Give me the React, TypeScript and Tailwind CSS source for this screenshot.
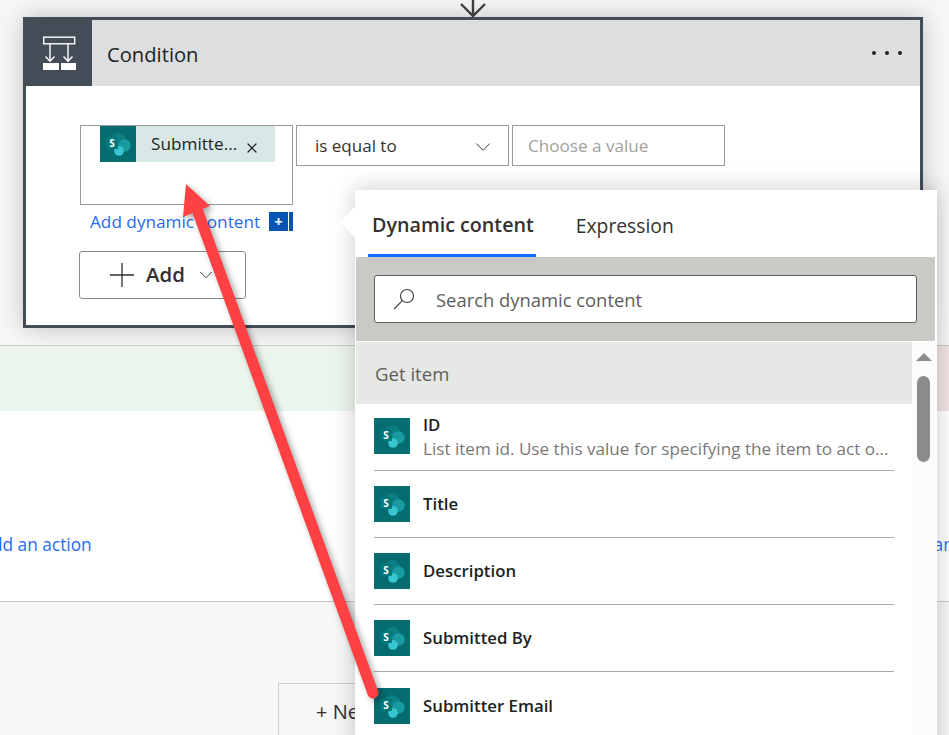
import { ChevronDown, X } from "lucide-react";

const FONT = "font-['Open_Sans','Noto_Sans',sans-serif]";

function SharePointIcon({ size = 36 }: { size?: number }) {
  return (
    <svg width={size} height={size} viewBox="0 0 36 36" className="shrink-0">
      <rect width="36" height="36" fill="#056c70" />
      <circle cx="18.5" cy="14.5" r="7.5" fill="#0b7f83" />
      <circle cx="24.5" cy="19.5" r="6.2" fill="#1a9ba1" />
      <circle cx="19" cy="25" r="4.8" fill="#37c6d0" />
      <rect x="6" y="11" width="12" height="12" rx="1" fill="#03787c" />
      <text x="12" y="21" textAnchor="middle" fontSize="10" fontWeight="700" fill="#fff" fontFamily="Open Sans, sans-serif">
        S
      </text>
    </svg>
  );
}

function ConditionIcon() {
  return (
    <svg width="36" height="36" viewBox="0 0 36 36" fill="none" stroke="#fff" strokeWidth="1.4">
      <rect x="3.7" y="2.2" width="31" height="6.6" />
      <path d="M10 9v17M5.5 21.5l4.5 4.7 4.5-4.7M28 9v17M23.5 21.5l4.5 4.7 4.5-4.7" />
      <rect x="3" y="28" width="16" height="7" fill="#fff" stroke="none" />
      <rect x="21" y="28" width="15" height="7" fill="#fff" stroke="none" />
    </svg>
  );
}

function FieldRow({ name, last }: { name: string; last?: boolean }) {
  return (
    <div className={`flex h-[67px] items-center gap-[13px] ${last ? "" : "border-b border-[#a8a8a8]"}`}>
      <SharePointIcon />
      <span className="text-[16.8px] font-semibold text-[#201f1e]">{name}</span>
    </div>
  );
}

function DynamicPanel() {
  return (
    <div className="absolute top-[190px] left-[355px] h-[560px] w-[582px] bg-white pl-px shadow-[0_0_22px_rgba(0,0,0,0.22)]">
      <div className="absolute top-[21px] -left-[11px] h-[22px] w-[22px] rotate-45 bg-white" />
      <div className="relative flex h-[67px] items-end gap-[40px] pl-[12px]">
        <div className="flex h-full flex-col justify-end border-b-[3px] border-[#0f6cfd] pr-[2px] pb-[14px] pl-[4px] text-[19.7px] font-semibold text-[#323130]">
          Dynamic content
        </div>
        <div className="pb-[16px] text-[19.3px] text-[#323130]">Expression</div>
      </div>
      <div className="relative h-[84px] w-[579px] bg-[#c8cac6] px-[18px] pt-[18px]">
        <div className="flex h-[48px] items-center gap-[19px] rounded-[3px] border border-[#605e5c] bg-white pl-[16px]">
          <svg width="26" height="26" viewBox="0 0 26 26" fill="none" stroke="#444" strokeWidth="1.2">
            <circle cx="16" cy="10" r="6.5" />
            <path d="M11.4 14.6 3 23" />
          </svg>
          <span className="mt-[2px] text-[18.4px] text-[#605e5c]">Search dynamic content</span>
        </div>
      </div>
      <div className="relative flex h-[600px] w-[579px] pt-px">
        <div className="w-[556px]">
          <div className="flex h-[62px] items-center bg-[#e6e8e5] pt-[2px] pl-[19px] text-[18.6px] text-[#605e5c]">Get item</div>
          <div className="w-[538px] pl-[18px]">
            <div className="flex h-[67px] items-center gap-[13px] border-b border-[#a8a8a8] pb-[2px]">
              <SharePointIcon />
              <div className="mt-[2px] min-w-0 leading-[24px]">
                <div className="text-[16.8px] font-semibold text-[#201f1e]">ID</div>
                <div className="truncate text-[17.1px] text-[#7a7876]">List item id. Use this value for specifying the item to act o...</div>
              </div>
            </div>
            <FieldRow name="Title" />
            <FieldRow name="Description" />
            <FieldRow name="Submitted By" />
            <FieldRow name="Submitter Email" last />
          </div>
        </div>
        <div className="flex w-[23px] flex-col items-center bg-[#fbfbfb] pt-[11px]">
          <div className="h-0 w-0 border-x-[8px] border-b-[8px] border-x-transparent border-b-[#8c8c8c]" />
          <div className="mt-[15px] h-[86px] w-[13px] rounded-full bg-[#8c8c8c]" />
        </div>
      </div>
    </div>
  );
}

function RedArrow() {
  return (
    <svg className="pointer-events-none absolute inset-0 drop-shadow-[3px_3px_3px_rgba(0,0,0,0.35)]" width="949" height="735" viewBox="0 0 949 735">
      <path d="M373 693 198 212" stroke="#ff4144" strokeWidth="11" strokeLinecap="round" fill="none" />
      <path d="M186 184 210 206 183 217Z" fill="#ff4144" />
    </svg>
  );
}

export default function App() {
  return (
    <div className={`relative h-[735px] w-[949px] overflow-hidden bg-[#f7f7f7] ${FONT}`}>
      <div className="flex h-[17px] justify-center overflow-hidden pr-[4px]">
        <svg width="32" height="17" viewBox="0 0 32 17" fill="none" stroke="#3c3c3c" strokeWidth="2.4">
          <path d="M16 -2v17M4 4l12 12 12-12" />
        </svg>
      </div>
      <div className="ml-[23px] h-[311px] w-[900px] border-[3px] border-[#444c58] bg-white shadow-[0_0_24px_rgba(0,0,0,0.22)]">
        <div className="flex h-[66px] bg-[#dcdee0]">
          <div className="-ml-[3px] flex w-[69px] items-center justify-center bg-[#444c58]">
            <ConditionIcon />
          </div>
          <div className="flex flex-1 items-center justify-between pr-[18px] pl-[15px] text-[20.2px] text-[#201f1e]">
            <span className="mt-[3px]">Condition</span>
            <div className="flex gap-[9px]">
              <span className="h-[4px] w-[4px] rounded-full bg-[#222]" />
              <span className="h-[4px] w-[4px] rounded-full bg-[#222]" />
              <span className="h-[4px] w-[4px] rounded-full bg-[#222]" />
            </div>
          </div>
        </div>
        <div className="pt-[39px] pl-[54px]">
          <div className="flex gap-[3px]">
            <div className="h-[80px] w-[213px] border border-[#999] pl-[19px]">
              <div className="flex h-[36px] w-[175px] items-center bg-[#d8e8e8]">
                <SharePointIcon />
                <span className="ml-[15px] text-[17.2px] text-[#201f1e]">Submitte...</span>
                <X size={16} strokeWidth={1.8} className="mt-[8px] ml-[7px] text-[#201f1e]" />
              </div>
            </div>
            <div className="flex h-[41px] w-[213px] items-center justify-between border border-[#999] pr-[12px] pl-[18px] text-[17px] text-[#323130]">
              <span>is equal to</span>
              <ChevronDown size={26} strokeWidth={0.9} className="mt-[2px] text-[#323130]" />
            </div>
            <div className="flex h-[41px] w-[213px] items-center border border-[#999] pl-[15px] text-[17.1px] text-[#a19f9d]">Choose a value</div>
          </div>
          <div className="mt-[4px] flex items-center gap-[9px] pl-[10px]">
            <span className="text-[17.2px] text-[#1f6cf0]">Add dynamic content</span>
            <span className="flex h-[19px] w-[24px]">
              <span className="flex w-[19px] items-center justify-center bg-[#0654b4] text-[14px] leading-none font-bold text-white">+</span>
              <span className="ml-px w-[4px] bg-[#0654b4]" />
            </span>
          </div>
          <button className="mt-[16px] -ml-px flex h-[48px] w-[167px] items-center rounded-[3px] border border-[#8a8a8a] pl-[29px] text-[20.4px] font-semibold text-[#323130]">
            <svg width="26" height="26" viewBox="0 0 26 26" stroke="#323130" strokeWidth="1.3">
              <path d="M13 1v24M1 13h24" />
            </svg>
            <span className="ml-[11px]">Add</span>
            <ChevronDown size={22} strokeWidth={1} className="ml-[10px] text-[#323130]" />
          </button>
        </div>
      </div>
      <div className="mt-[17px] flex h-[257px] border-y border-[#c8c8c8] bg-white">
        <div className="w-[500px] shrink-0">
          <div className="h-[65px] bg-[#ecf5ec]" />
          <div className="-ml-[19px] pt-[121px] text-[17.3px] text-[#1f6cf0]">Add an action</div>
        </div>
        <div className="min-w-0 flex-1 overflow-hidden">
          <div className="h-[65px] bg-[#f3e3e3]" />
          <div className="pt-[121px] pl-[397px] text-[17.3px] whitespace-nowrap text-[#1f6cf0]">Add an action</div>
        </div>
      </div>
      <div className="mt-[81px] ml-[278px] h-[60px] w-[390px] border border-[#cfcfcf] pt-[13px] pl-[37px] text-[20px] text-[#323130]">+ New step</div>
      <DynamicPanel />
      <RedArrow />
    </div>
  );
}
